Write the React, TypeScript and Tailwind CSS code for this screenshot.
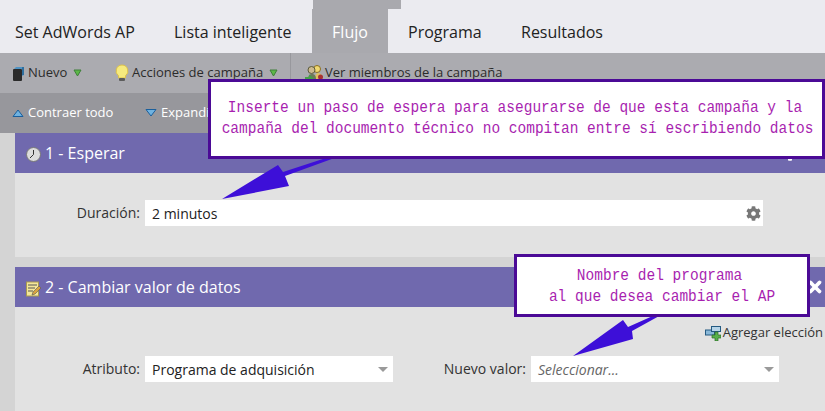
import { FaCog } from "react-icons/fa";
import { X } from "lucide-react";

const Caret = () => (
  <svg width="9" height="8" viewBox="0 0 9 8" className="ml-[6px]">
    <path d="M1 1h7L4.500 7z" fill="#5cb848" stroke="#3f7f3a" />
  </svg>
);

const SelectCaret = () => <span className="w-0 h-0 border-x-[5px] border-x-transparent border-t-[5px] border-t-[#9a9a9a]" />;

const App = () => {
  return (
    <div className="relative w-[825px] h-[411px] overflow-hidden bg-[#d4d4d4] font-['Open_Sans',sans-serif]">
      {/* tabs */}
      <div className="relative flex h-[53px] bg-[#ebebf0] text-[16px] text-[#222]">
        <div className="absolute left-[313px] top-0 w-[88px] h-[9px] bg-[#a9a9ae]" />
        <div className="pl-[15px] w-[174px] pt-[20px] leading-[24px]">Set AdWords AP</div>
        <div className="w-[138px] pt-[20px] leading-[24px]">Lista inteligente</div>
        <div className="w-[76px] mt-[9px] bg-[#a9a9ae] text-white text-center pt-[11px] leading-[24px]">Flujo</div>
        <div className="w-[113px] pl-[20px] pt-[20px] leading-[24px]">Programa</div>
        <div className="pl-[20px] pt-[20px] leading-[24px]">Resultados</div>
      </div>
      {/* toolbar */}
      <div className="flex items-center h-[40px] bg-[#ababb0] text-[13px] text-[#2b2b2b]">
        <div className="flex items-center pl-[13px] w-[115px]">
          <svg width="11" height="15" viewBox="0 0 11 15" className="mr-[4px]">
            <rect x="0" y="3" width="9" height="12" rx="1" fill="#2a2a2a" />
            <path d="M1 3L3 1h8v8l-2 1V3z" fill="#4f93c4" />
            <rect x="9" y="1" width="2" height="8" fill="#2f6f9f" />
          </svg>
          Nuevo
          <Caret />
        </div>
        <div className="flex items-center w-[176px] h-full border-r border-[#98989d]">
          <svg width="14" height="18" viewBox="0 0 14 18" className="mr-[3px]">
            <path d="M7 1a6 6 0 0 0-3.500 10.800V14h7v-2.200A6 6 0 0 0 7 1z" fill="#f6ea7e" stroke="#dcc14a" />
            <rect x="4" y="14" width="6" height="3" rx="1" fill="#5c5c5c" />
          </svg>
          Acciones de campaña
          <Caret />
        </div>
        <div className="flex items-center pl-[14px]">
          <svg width="19" height="18" viewBox="0 0 19 18">
            <circle cx="12" cy="5" r="3.500" fill="#f0d870" stroke="#8a6d20" />
            <circle cx="6.500" cy="6" r="3.500" fill="#cdb98e" stroke="#5a5a3a" />
            <path d="M10 15c0-4 1-6 3-6s4 1 4 4v2z" fill="#e0c060" />
            <path d="M3 15c0-4 2-5 4-5s4 1 4 5z" fill="#6d7a5a" />
            <path d="M0 13h4v-2.500l5 4-5 3.500v-2H0z" fill="#46a048" />
            <circle cx="15.500" cy="13" r="2.500" fill="#a83232" />
          </svg>
          <span className="ml-[1px]">Ver miembros de la campaña</span>
        </div>
      </div>
      <div className="flex items-center h-[40px] bg-[#97979c] text-[13px] text-white">
        <div className="flex items-center pl-[12px] w-[145px]">
          <svg width="12" height="8" viewBox="0 0 12 8" className="mr-[4px]">
            <path d="M1 7.500L6 1l5 6.500z" fill="#6fb2e0" stroke="#1a5f9c" />
          </svg>
          Contraer todo
        </div>
        <div className="flex items-center">
          <svg width="12" height="8" viewBox="0 0 12 8" className="mr-[4px]">
            <path d="M1 .500L6 7l5-6.500z" fill="#6fb2e0" stroke="#1a5f9c" />
          </svg>
          Expandir todo
        </div>
      </div>
      {/* flow steps */}
      <div className="pl-[15px]">
        <div className="flex items-center justify-between h-[40px] bg-[#7069ae] text-white text-[16px] pl-[11px] pr-[3px]">
          <div className="flex items-center">
            <svg width="15" height="15" viewBox="0 0 15 15" className="mr-[4px] mt-[2px]">
              <circle cx="7.500" cy="7.500" r="7" fill="#dcdcdc" stroke="#777" />
              <path d="M7.500 3v4.500L4 11" fill="none" stroke="#333" />
            </svg>
            1 - Esperar
          </div>
          <div className="flex items-center gap-[10px]">
            <FaCog size={16} />
            <X size={14} strokeWidth={4} />
          </div>
        </div>
        <div className="h-[84px] bg-[#e2e2e2] pt-[27px] flex items-start">
          <div className="w-[125px] text-right text-[14px] leading-[25px] text-[#333]">Duración:</div>
          <div className="ml-[5px] flex items-center justify-between w-[618px] h-[26px] bg-white pl-[7px] pr-[2px] text-[14px] text-[#222]">
            2 minutos
            <FaCog size={15} className="text-[#777]" />
          </div>
        </div>
        <div className="h-[10px]" />
        <div className="flex items-center justify-between h-[40px] bg-[#7069ae] text-white text-[16px] pl-[11px] pr-[1px]">
          <div className="flex items-center">
            <svg width="15" height="16" viewBox="0 0 15 16" className="mr-[4px] mt-[3px]">
              <rect x="0.500" y="1" width="12" height="14" fill="#f4e79a" stroke="#a89a50" />
              <path d="M2 4h9M2 7h7M2 10h5" stroke="#555" />
              <path d="M6 14l1-3 6-6 2 2-6 6z" fill="#d9a441" stroke="#555" strokeWidth="0.600" />
            </svg>
            2 - Cambiar valor de datos
          </div>
          <X size={18} strokeWidth={5} />
        </div>
        <div className="h-[104px] bg-[#e2e2e2]">
          <div className="flex justify-end items-center h-[36px] pt-[16px] text-[13px] text-[#333] pr-[2px]">
            <svg width="16" height="15" viewBox="0 0 16 15" className="mr-[2px]">
              <rect x="0.500" y="4" width="9" height="5" fill="#8ab8d8" stroke="#245a82" />
              <rect x="6.500" y="0.500" width="9" height="5" fill="#b6d4e8" stroke="#245a82" />
              <path d="M10 6h3v3h3v3h-3v3h-3v-3H7V9h3z" fill="#58b04a" stroke="#2c6a28" strokeWidth="0.700" />
            </svg>
            Agregar elección
          </div>
          <div className="flex items-start mt-[13px]">
            <div className="w-[125px] text-right text-[14px] leading-[25px] text-[#333]">Atributo:</div>
            <div className="ml-[5px] flex items-center justify-between w-[248px] h-[26px] bg-white pl-[7px] pr-[5px] text-[14px] text-[#222]">
              Programa de adquisición
              <SelectCaret />
            </div>
            <div className="w-[133px] text-right text-[14px] leading-[26px] text-[#333]">Nuevo valor:</div>
            <div className="ml-[5px] flex items-center justify-between w-[248px] h-[26px] bg-white pl-[7px] pr-[5px] text-[14px] italic text-[#666]">
              Seleccionar...
              <SelectCaret />
            </div>
          </div>
        </div>
      </div>
      {/* annotation arrows */}
      <svg width="825" height="411" viewBox="0 0 825 411" className="absolute left-0 top-0">
        <path d="M222 199L278 165L283 172L332 156L340 156L285 176L289 186Z" fill="#3d0fd8" />
        <path d="M573 356L623 320L628 327L655 315L661 315L632 331L633 339Z" fill="#3d0fd8" />
      </svg>
      {/* callouts */}
      <div className="absolute left-[208px] top-[79px] w-[617px] h-[80px] border-[3px] border-[#4b0a96] bg-white flex flex-col justify-center items-center font-['Liberation_Mono',monospace] text-[14.500px] leading-[21px] text-[#a81fb0] whitespace-pre pb-[2px]">
        <div className="scale-y-[1.15] pr-[3px]">Inserte un paso de espera para asegurarse de que esta campaña y la</div>
        <div className="scale-y-[1.15] pl-[2px]">campaña del documento técnico no compitan entre sí escribiendo datos</div>
      </div>
      <div className="absolute left-[514px] top-[254px] w-[296px] h-[63px] border-[3px] border-[#4b0a96] bg-white flex flex-col justify-center items-center font-['Liberation_Mono',monospace] text-[14.500px] leading-[21px] text-[#a81fb0] whitespace-pre">
        <div className="scale-y-[1.15] pr-[5px]">Nombre del programa</div>
        <div className="scale-y-[1.15]">al que desea cambiar el AP</div>
      </div>
    </div>
  );
};

export default App;
